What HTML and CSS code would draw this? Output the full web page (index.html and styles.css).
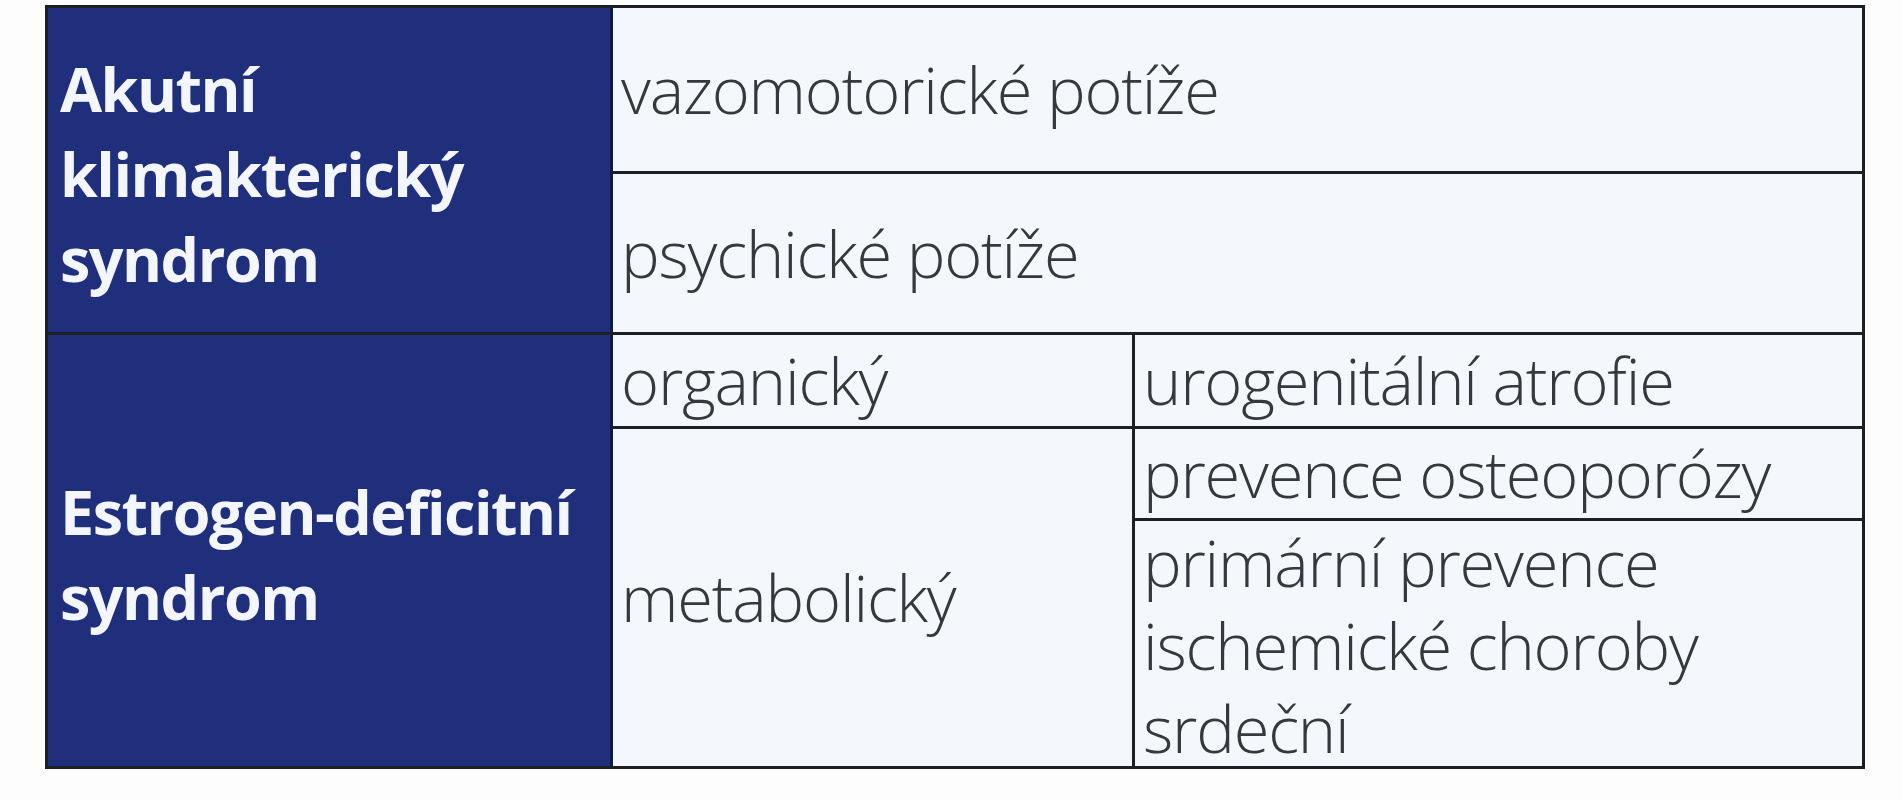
FILE: index.html
```html
<!DOCTYPE html>
<html lang="cs">
<head>
<meta charset="utf-8">
<title>Klimakterický syndrom</title>
<link rel="stylesheet" href="styles.css">
</head>
<body>
<div class="table">
  <div class="head head-a">Akutní<br>klimakterický<br>syndrom</div>
  <div class="cell c-vazo">vazomotorické potíže</div>
  <div class="cell c-psych">psychické potíže</div>
  <div class="head head-b">Estrogen-deficitní<br>syndrom</div>
  <div class="cell c-org">organický</div>
  <div class="cell c-uro">urogenitální atrofie</div>
  <div class="cell c-meta">metabolický</div>
  <div class="cell c-osteo">prevence osteoporózy</div>
  <div class="cell c-prim">primární prevence<br>ischemické choroby<br>srdeční</div>
</div>
</body>
</html>
```
FILE: styles.css
```css
html, body {
  margin: 0;
  padding: 0;
  background: #fdfdfd;
}

body {
  padding: 5px 0 0 45px;
}

.table {
  display: grid;
  width: 1820px;
  box-sizing: border-box;
  grid-template-columns: 562px 519px 727px;
  grid-template-rows: 163px 158px 91px 89px 245px;
  gap: 3px;
  padding: 3px;
  background: #1c2024;
}

.head {
  background: #1f2f7c;
  color: #f3f5ff;
  font-family: "Open Sans", "Liberation Sans", sans-serif;
  font-weight: 700;
  font-size: 61px;
  line-height: 85px;
  letter-spacing: -1.5px;
  display: flex;
  align-items: center;
  padding-left: 12px;
}

.head-a {
  grid-column: 1;
  grid-row: 1 / 3;
  padding-top: 6px;
  box-shadow: 3px 0 0 #101a48;
}

.head-b {
  grid-column: 1;
  grid-row: 3 / 6;
  padding-top: 6px;
  box-shadow: 3px 0 0 #101a48;
}

.cell {
  background: #f4f8fd;
  color: #35383c;
  font-family: "Open Sans", "Liberation Sans", sans-serif;
  font-weight: 300;
  font-size: 65px;
  line-height: 83px;
  letter-spacing: -1.2px;
  display: flex;
  align-items: center;
  padding-left: 8px;
}

.c-vazo { grid-column: 2 / 4; grid-row: 1; }
.c-psych { grid-column: 2 / 4; grid-row: 2; }
.c-org { grid-column: 2; grid-row: 3; }
.c-uro { grid-column: 3; grid-row: 3; }
.c-meta { grid-column: 2; grid-row: 4 / 6; }
.c-osteo { grid-column: 3; grid-row: 4; }
.c-prim { grid-column: 3; grid-row: 5; align-items: flex-start; }
```
